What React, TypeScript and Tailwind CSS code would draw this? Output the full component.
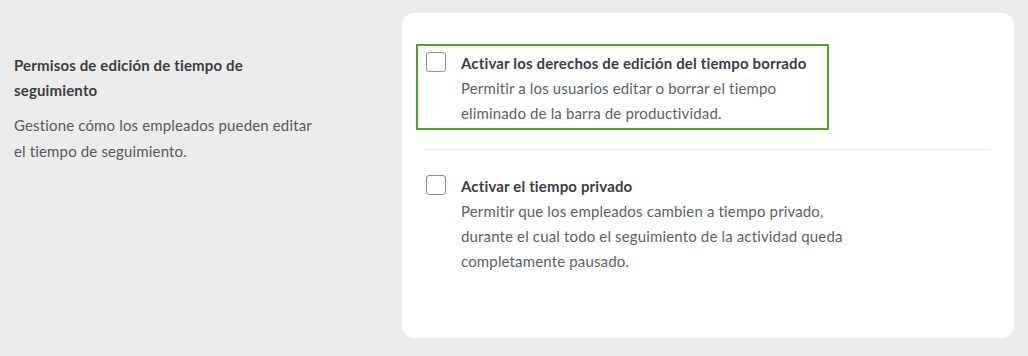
import React from "react";

function Check() {
  return <div className="mt-[1px] h-5 w-5 shrink-0 rounded-[3px] border border-[#8e9297] bg-white" />;
}

export default function App() {
  return (
    <div
      className="flex h-[356px] w-[1028px] bg-[#ebeceb] text-[15px] leading-[25px] tracking-[0.15px]"
      style={{ fontFamily: "Lato, 'Noto Sans', sans-serif" }}
    >
      <div className="w-[402px] shrink-0 pl-[14px] pt-[53px]">
        <div className="w-[290px] font-bold text-[#3a3d42]">Permisos de edición de tiempo de seguimiento</div>
        <div className="mt-[9px] w-[300px] leading-[26px] text-[#55595f]">
          Gestione cómo los empleados pueden editar el tiempo de seguimiento.
        </div>
      </div>
      <div className="mt-[13px] mb-[18px] w-[612px] rounded-[12px] bg-white pl-[14px] pr-[24px] pt-[31px]">
        <div className="flex w-[413px] gap-[15px] border-[2.5px] border-[#4ea61a] pt-[5px] pb-[2px] pl-[8px]">
          <Check />
          <div>
            <div className="font-bold text-[#3a3d42]">Activar los derechos de edición del tiempo borrado</div>
            <div className="text-[#5b5f66]">
              Permitir a los usuarios editar o borrar el tiempo
              <br />
              eliminado de la barra de productividad.
            </div>
          </div>
        </div>
        <div className="ml-[9px] mt-[19px] h-px bg-[#ebebeb]" />
        <div className="ml-[10px] mt-[24px] flex gap-[15px]">
          <Check />
          <div>
            <div className="font-bold text-[#3a3d42]">Activar el tiempo privado</div>
            <div className="text-[#5b5f66]">
              Permitir que los empleados cambien a tiempo privado,
              <br />
              durante el cual todo el seguimiento de la actividad queda
              <br />
              completamente pausado.
            </div>
          </div>
        </div>
      </div>
    </div>
  );
}
